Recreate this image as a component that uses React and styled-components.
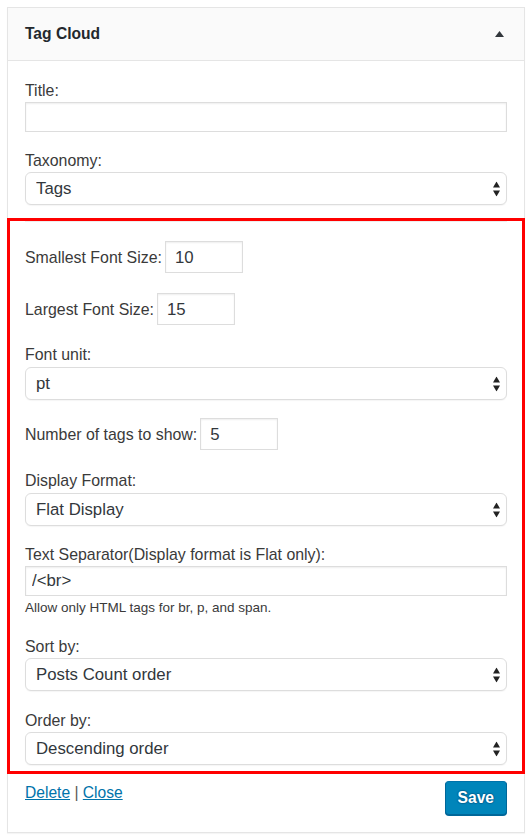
import React from "react";
import styled, { createGlobalStyle } from "styled-components";

const GlobalStyle = createGlobalStyle`
  html, body { margin: 0; padding: 0; background: #fff; }
  body { font-family: "Liberation Sans", Arial, Helvetica, sans-serif; }
  * { box-sizing: border-box; }
`;

const Page = styled.div`
  padding: 7px 7px 6px;
`;

const Widget = styled.div`
  border: 1px solid #e5e5e5;
  background: #fff;
  box-shadow: 0 1px 1px rgba(0, 0, 0, 0.04);
`;

const Header = styled.div`
  height: 53px;
  display: flex;
  align-items: center;
  justify-content: space-between;
  padding: 0 20px 0 17px;
  background: #fafafa;
  border-bottom: 1px solid #e5e5e5;
`;

const Title = styled.h3`
  margin: 0;
  font-size: 15.6px;
  line-height: 20px;
  font-weight: bold;
  color: #23282d;
`;

const Body = styled.div`
  padding: 20px 17px 17px;
`;

const Field = styled.div`
  margin-top: ${(p) => p.$gap || 0}px;
`;

const Label = styled.label`
  display: block;
  font-size: 15.9px;
  line-height: 20px;
  color: #3a3a3a;
  margin-bottom: ${(p) => p.$mb ?? 1}px;
`;

const InlineLabel = styled.label`
  font-size: 15.9px;
  line-height: 20px;
  color: #3a3a3a;
`;

const TextInput = styled.input`
  display: block;
  width: 100%;
  height: 30px;
  margin: 0;
  padding: 0 6px;
  border: 1px solid #ddd;
  border-radius: 0;
  box-shadow: inset 0 1px 2px rgba(0, 0, 0, 0.07);
  background: #fff;
  font-family: "Liberation Sans", Arial, sans-serif;
  font-size: 16.8px;
  color: #32373c;
  outline: none;
`;

const SmallInput = styled(TextInput)`
  display: inline-block;
  width: 78px;
  height: 32px;
  padding: 2px 9px 0;
`;

const Row = styled.div`
  display: flex;
  align-items: baseline;
  gap: 3px;
  margin-top: ${(p) => p.$gap || 0}px;
`;

const SelectWrap = styled.div`
  position: relative;
`;

const Select = styled.select`
  display: block;
  width: 100%;
  height: 33px;
  margin: 0;
  padding: 0 24px 0 10px;
  appearance: none;
  -webkit-appearance: none;
  border: 1px solid #ddd;
  border-radius: 6px;
  background: #fff;
  box-shadow: 0 1px 1px rgba(0, 0, 0, 0.04);
  font-family: "Liberation Sans", Arial, sans-serif;
  font-size: 16.8px;
  color: #32373c;
  outline: none;
`;

const Arrows = styled.svg`
  position: absolute;
  right: 7px;
  top: 50%;
  transform: translateY(-50%);
  pointer-events: none;
`;

const Highlight = styled.section`
  margin: 13px -18px 0;
  border: 3px solid #ff0000;
  padding: 0 15px 6px;
`;

const Separator = styled.div`
  height: 1px;
  background: #eee;
`;

const Help = styled.p`
  margin: 3px 0 0;
  font-size: 13.5px;
  line-height: 17px;
  color: #3a3a3a;
`;

const Footer = styled.div`
  display: flex;
  justify-content: space-between;
  align-items: flex-start;
  margin-top: 7px;
`;

const Links = styled.div`
  padding-top: 2px;
  font-size: 15.6px;
  line-height: 20px;
  color: #555;
`;

const Link = styled.a`
  color: #0073aa;
  text-decoration: underline;
  cursor: pointer;
`;

const SaveButton = styled.button`
  height: 34px;
  padding: 0 12px;
  margin: 0;
  border: 1px solid;
  border-color: #0073aa #006799 #006799;
  border-radius: 4px;
  background: #0085ba;
  box-shadow: 0 1px 0 #006799;
  color: #fff;
  font-family: "Liberation Sans", Arial, sans-serif;
  font-size: 15.6px;
  font-weight: bold;
  text-shadow: 0 -1px 1px #006799, 1px 0 1px #006799, 0 1px 1px #006799,
    -1px 0 1px #006799;
  cursor: pointer;
`;

const CollapseIcon = () => (
  <svg width="9" height="6" viewBox="0 0 9 6">
    <polygon points="0,6 4.5,0 9,6" fill="#32373c" />
  </svg>
);

const SelectBox = ({ value, options }) => (
  <SelectWrap>
    <Select defaultValue={value}>
      {options.map((o) => (
        <option key={o}>{o}</option>
      ))}
    </Select>
    <Arrows width="7" height="15" viewBox="0 0 7 15">
      <polygon points="0,6 3.5,0 7,6" fill="#222" />
      <polygon points="0,9 7,9 3.5,15" fill="#222" />
    </Arrows>
  </SelectWrap>
);

export default function App() {
  return (
    <>
      <GlobalStyle />
      <Page>
        <Widget>
          <Header>
            <Title>Tag Cloud</Title>
            <CollapseIcon />
          </Header>
          <Body>
            <Field>
              <Label>Title:</Label>
              <TextInput type="text" defaultValue="" />
            </Field>
            <Field $gap={19}>
              <Label>Taxonomy:</Label>
              <SelectBox value="Tags" options={["Tags", "Categories"]} />
            </Field>

            <Highlight>
              <Separator />
              <Row $gap={19}>
                <InlineLabel>Smallest Font Size:</InlineLabel>
                <SmallInput type="text" defaultValue="10" />
              </Row>
              <Row $gap={20}>
                <InlineLabel>Largest Font Size:</InlineLabel>
                <SmallInput type="text" defaultValue="15" />
              </Row>
              <Field $gap={20}>
                <Label $mb={2}>Font unit:</Label>
                <SelectBox value="pt" options={["pt", "px", "em", "%"]} />
              </Field>
              <Row $gap={18}>
                <InlineLabel>Number of tags to show:</InlineLabel>
                <SmallInput type="text" defaultValue="5" />
              </Row>
              <Field $gap={21}>
                <Label $mb={2}>Display Format:</Label>
                <SelectBox
                  value="Flat Display"
                  options={["Flat Display", "List Display"]}
                />
              </Field>
              <Field $gap={19}>
                <Label>Text Separator(Display format is Flat only):</Label>
                <TextInput type="text" defaultValue="/<br>" />
                <Help>Allow only HTML tags for br, p, and span.</Help>
              </Field>
              <Field $gap={21}>
                <Label>Sort by:</Label>
                <SelectBox
                  value="Posts Count order"
                  options={["Posts Count order", "Name order", "Random order"]}
                />
              </Field>
              <Field $gap={20}>
                <Label>Order by:</Label>
                <SelectBox
                  value="Descending order"
                  options={["Descending order", "Ascending order"]}
                />
              </Field>
            </Highlight>

            <Footer>
              <Links>
                <Link>Delete</Link> | <Link>Close</Link>
              </Links>
              <SaveButton type="button">Save</SaveButton>
            </Footer>
          </Body>
        </Widget>
      </Page>
    </>
  );
}
